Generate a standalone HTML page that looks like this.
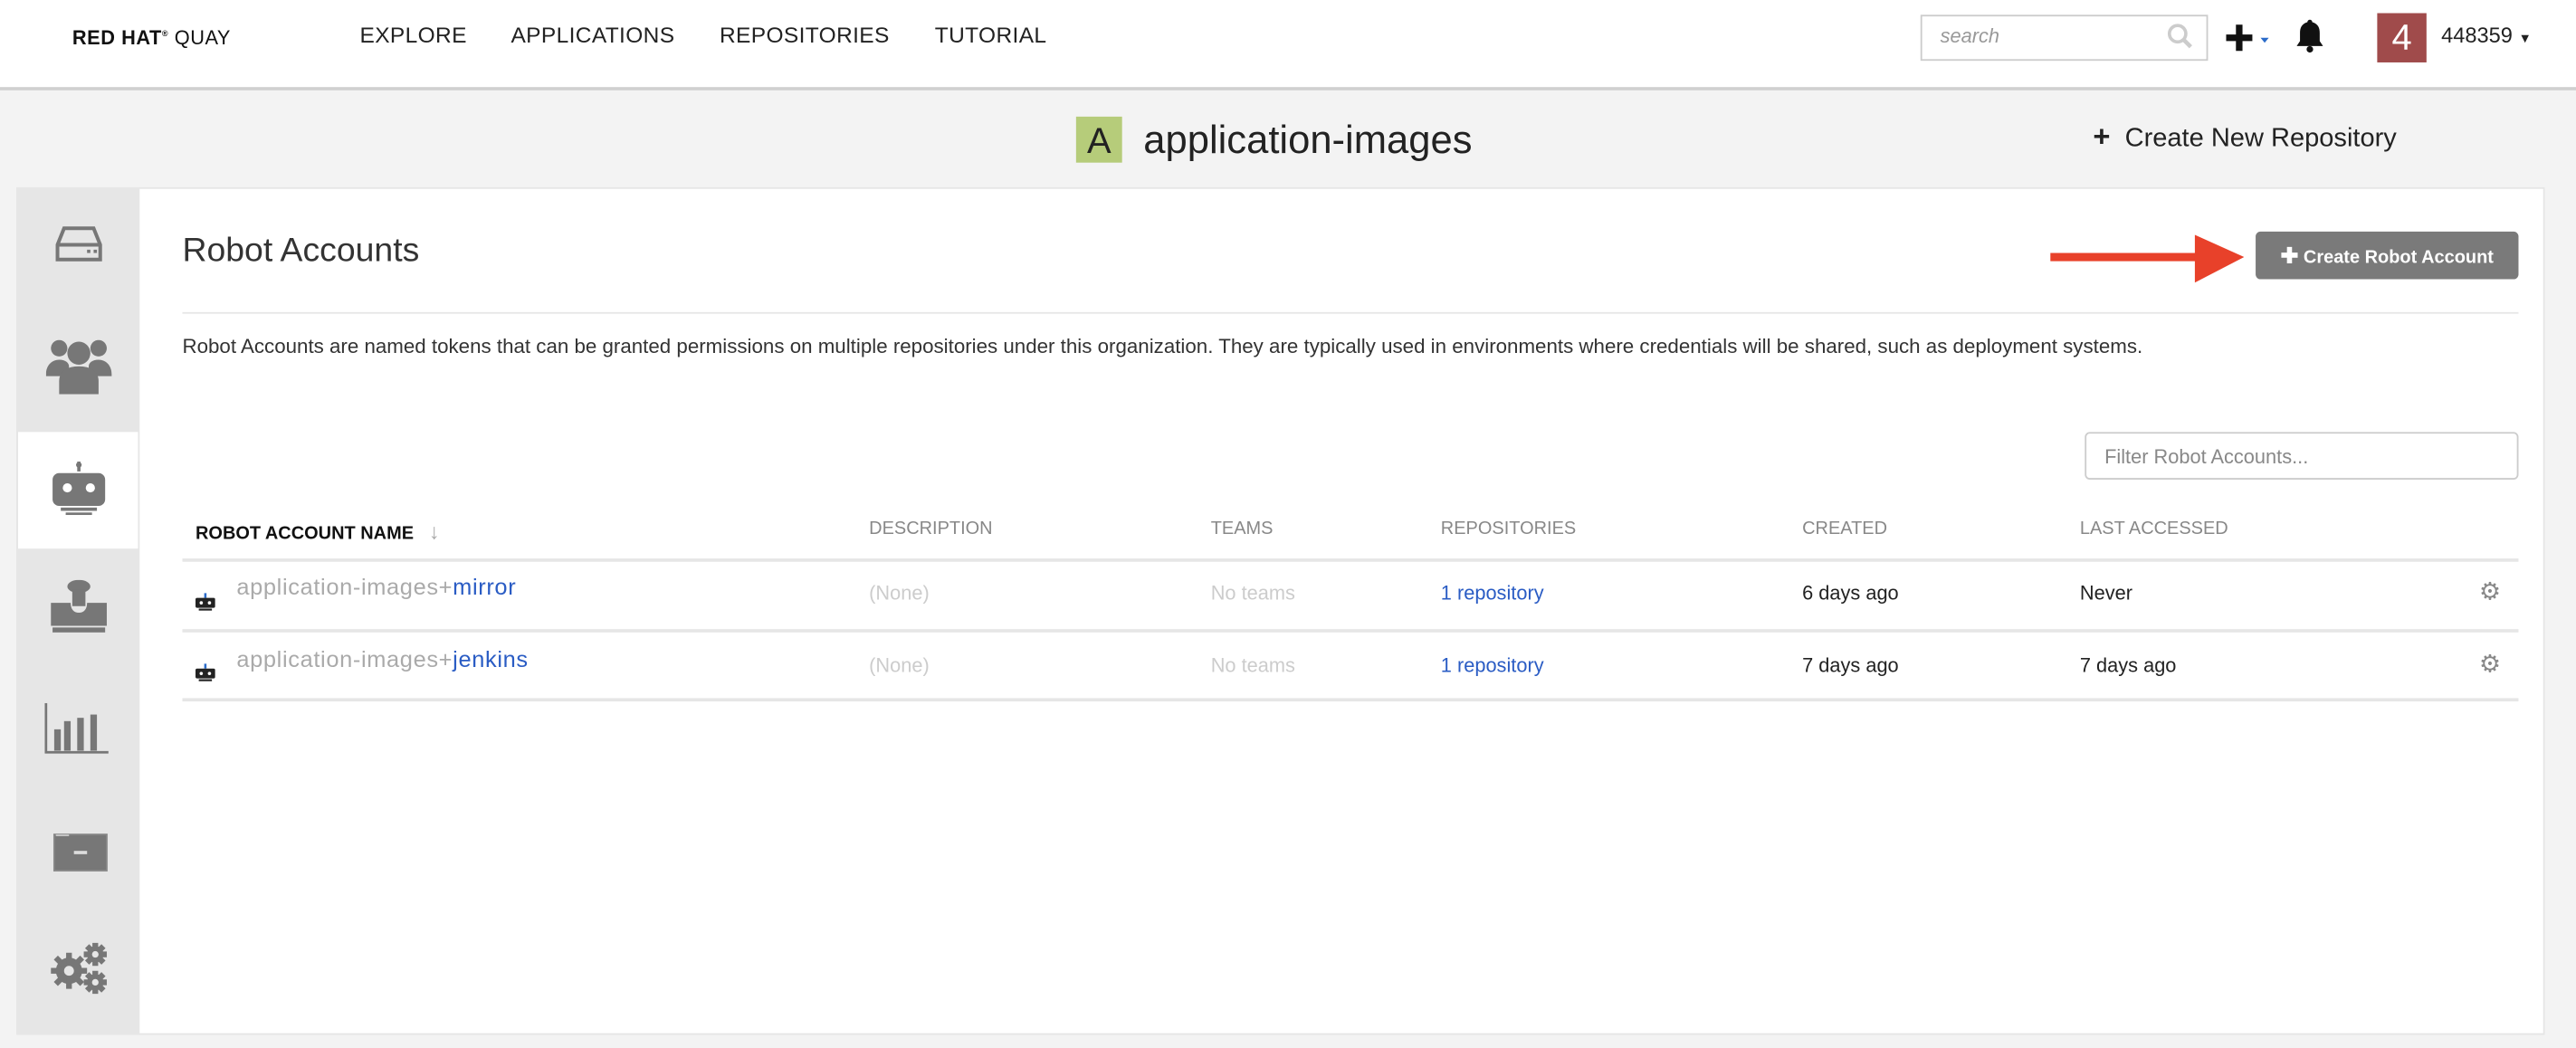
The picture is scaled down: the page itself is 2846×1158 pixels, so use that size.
<!DOCTYPE html>
<html><head><meta charset="utf-8"><style>
html,body{margin:0;padding:0;width:2846px;height:1158px;overflow:hidden;background:#f3f3f3}
#s{position:absolute;left:0;top:0;width:1568px;height:638px;transform:scale(1.81505);transform-origin:0 0;font-family:"Liberation Sans",sans-serif;color:#333;background:#f3f3f3}
.a{position:absolute;white-space:nowrap}
.hdr{position:absolute;left:0;top:0;width:1568px;height:53px;background:#fff;border-bottom:2px solid #d0d0d0}
.nav{font-size:13.5px;color:#222;top:14px;letter-spacing:.2px}
.th{font-size:11px;color:#888;top:316px}
.td{font-size:12px;top:354px}
.line{position:absolute;left:111px;width:1422px;height:1px;background:#e6e6e6}
</style></head><body><div id="s">
<div class="hdr"></div>
<div class="a" style="left:44px;top:16px;font-size:12px;font-weight:bold;color:#111;letter-spacing:.3px">RED HAT<sup style="font-size:5px">®</sup> <span style="font-weight:normal">QUAY</span></div>
<div class="a nav" style="left:219px">EXPLORE</div>
<div class="a nav" style="left:311px">APPLICATIONS</div>
<div class="a nav" style="left:438px">REPOSITORIES</div>
<div class="a nav" style="left:569px">TUTORIAL</div>
<div class="a" style="left:1169px;top:9px;width:173px;height:26px;border:1px solid #ccc;background:#fff"></div>
<div class="a" style="left:1181px;top:15px;font-size:12px;font-style:italic;color:#999">search</div>
<svg class="a" style="left:1319px;top:14px" width="16" height="16" viewBox="0 0 16 16"><circle cx="6.5" cy="6.5" r="5" fill="none" stroke="#ccc" stroke-width="2"/><path d="M10 10l4.5 4.5" stroke="#ccc" stroke-width="2.5"/></svg>
<svg class="a" style="left:1355px;top:14px" width="30" height="18" viewBox="0 0 30 18"><path d="M8 1v16M0 9h16" stroke="#111" stroke-width="4"/><path d="M21 9h5l-2.5 3z" fill="#2a6bc9"/></svg>
<svg class="a" style="left:1396px;top:11px" width="20" height="22" viewBox="0 0 20 22"><path d="M10 1c-1 0-1.5 1-1.5 1.5C5 3.5 4 6 4 9v5l-2 3h16l-2-3V9c0-3-1-5.5-4.5-6.5C11.5 2 11 1 10 1z" fill="#111"/><circle cx="10" cy="19" r="2" fill="#111"/></svg>
<div class="a" style="left:1447px;top:8px;width:30px;height:30px;background:#a04b4b;color:#fff;font-size:22px;text-align:center;line-height:30px">4</div>
<div class="a" style="left:1486px;top:14px;font-size:13px;color:#222">448359 <span style="font-size:8px">▼</span></div>

<div class="a" style="left:655px;top:71px;width:28px;height:28px;background:#b6cc7a;font-size:22px;text-align:center;line-height:29px;color:#222">A</div>
<div class="a" style="left:696px;top:72px;font-size:24px;color:#222">application-images</div>
<div class="a" style="left:1274px;top:73px;font-size:16px;color:#222"><b style="font-size:18px">+</b>&nbsp; Create New Repository</div>

<div class="a" style="left:10px;top:114px;width:1539px;height:516px;background:#fff;border:1px solid #e6e6e6;box-sizing:border-box"></div>
<div class="a" style="left:10px;top:114px;width:75px;height:516px;background:#e6e6e6"></div>
<div class="a" style="left:11px;top:263px;width:73px;height:71px;background:#fff"></div>
<svg class="a" style="left:33px;top:136px" width="30" height="26" viewBox="0 0 30 26"><path d="M6 3h18l4 10v9H2v-9z M2 13h26" fill="none" stroke="#777" stroke-width="2.2"/><rect x="20" y="16" width="2" height="2" fill="#777"/><rect x="24" y="16" width="2" height="2" fill="#777"/></svg>
<svg class="a" style="left:28px;top:204px" width="40" height="36" viewBox="0 0 40 36"><circle cx="8" cy="8" r="5" fill="#777"/><circle cx="32" cy="8" r="5" fill="#777"/><circle cx="20" cy="11" r="7" fill="#777"/><path d="M0 24c0-6 4-9 8-9s6 2 6 4v6H0z M40 24c0-6-4-9-8-9s-6 2-6 4v6h14z" fill="#777"/><path d="M8 36v-8c0-6 5-9 12-9s12 3 12 9v8z" fill="#777"/></svg>
<svg class="a" style="left:31px;top:281px" width="34" height="36" viewBox="0 0 34 36"><rect x="16" y="0" width="2" height="6" fill="#777"/><circle cx="17" cy="2" r="1.7" fill="#777"/><rect x="1" y="7" width="32" height="20" rx="4" fill="#777"/><circle cx="10" cy="16" r="2.8" fill="#fff"/><circle cx="24" cy="16" r="2.8" fill="#fff"/><rect x="6" y="28" width="22" height="2" fill="#777"/><rect x="9" y="31" width="16" height="1.5" fill="#777"/></svg>
<svg class="a" style="left:30px;top:353px" width="36" height="34" viewBox="0 0 36 34"><ellipse cx="18" cy="4" rx="7" ry="4" fill="#777"/><rect x="14" y="6" width="8" height="10" fill="#777"/><path d="M1 14h12c0 4 2 6 5 6s5-2 5-6h12v14H1z" fill="#777"/><rect x="2" y="29" width="32" height="3" fill="#777"/></svg>
<svg class="a" style="left:27px;top:428px" width="40" height="32" viewBox="0 0 40 32"><path d="M1 0v30h38" fill="none" stroke="#777" stroke-width="1.5"/><rect x="6" y="16" width="4" height="13" fill="#777"/><rect x="12" y="11" width="4" height="18" fill="#777"/><rect x="20" y="9" width="4" height="20" fill="#777"/><rect x="28" y="7" width="4" height="22" fill="#777"/></svg>
<svg class="a" style="left:32px;top:507px" width="34" height="24" viewBox="0 0 34 24"><rect x="1" y="1" width="32" height="22" fill="#777" stroke="#888"/><rect x="2" y="1" width="8" height="1" fill="#ccc"/><rect x="13" y="11" width="8" height="2" fill="#ddd"/></svg>
<svg class="a" style="left:29px;top:572px" width="38" height="34" viewBox="0 0 38 34"><g fill="#777"><circle cx="13" cy="19" r="8"/><circle cx="29" cy="9" r="5"/><circle cx="29" cy="26" r="5"/></g><g stroke="#777" stroke-width="3.5"><path d="M13 8v22M2 19h22M5 11l16 16M21 11L5 27"/><path d="M29 2v14M22 9h14M24 4l10 10M34 4L24 14"/><path d="M29 19v14M22 26h14M24 21l10 10M34 21L24 31"/></g><circle cx="13" cy="19" r="3" fill="#e6e6e6"/><circle cx="29" cy="9" r="2" fill="#e6e6e6"/><circle cx="29" cy="26" r="2" fill="#e6e6e6"/></svg>

<div class="a" style="left:111px;top:141px;font-size:20.6px;color:#333">Robot Accounts</div>
<div class="line" style="top:190px"></div>
<div class="a" style="left:111px;top:204px;font-size:12.3px;color:#333">Robot Accounts are named tokens that can be granted permissions on multiple repositories under this organization. They are typically used in environments where credentials will be shared, such as deployment systems.</div>
<svg class="a" style="left:1248px;top:143px" width="118" height="30" viewBox="0 0 118 30"><rect x="0" y="11" width="90" height="5" fill="#e8412a"/><path d="M88 0l30 13.5L88 29z" fill="#e8412a"/></svg>
<div class="a" style="left:1373px;top:141px;width:160px;height:29px;background:#7a7a7a;border-radius:3px;color:#fff;font-size:11px;font-weight:bold;line-height:29px;text-align:center"><span style="font-size:13px">✚</span> Create Robot Account</div>
<div class="a" style="left:1269px;top:263px;width:264px;height:29px;border:1px solid #ccc;border-radius:3px;box-sizing:border-box;background:#fff"></div>
<div class="a" style="left:1281px;top:271px;font-size:12px;color:#888">Filter Robot Accounts...</div>

<div class="a th" style="left:119px;color:#111;font-weight:bold">ROBOT ACCOUNT NAME &nbsp; <span style="color:#aaa;font-weight:normal;font-size:13px">↓</span></div>
<div class="a th" style="left:529px">DESCRIPTION</div>
<div class="a th" style="left:737px">TEAMS</div>
<div class="a th" style="left:877px">REPOSITORIES</div>
<div class="a th" style="left:1097px">CREATED</div>
<div class="a th" style="left:1266px">LAST ACCESSED</div>
<div class="line" style="top:340px;height:2px"></div>
<div class="line" style="top:383px;height:2px"></div>
<div class="line" style="top:425px;height:2px"></div>

<svg class="a" style="left:119px;top:361px" width="12" height="11" viewBox="0 0 12 11"><rect x="5.3" y="0" width="1.4" height="3" fill="#2a6bc9"/><rect x="0" y="3" width="12" height="6" rx="1" fill="#222"/><circle cx="3.5" cy="6" r="1" fill="#fff"/><circle cx="8.5" cy="6" r="1" fill="#fff"/><rect x="2" y="9.5" width="8" height="1.2" fill="#222"/></svg>
<svg class="a" style="left:119px;top:404px" width="12" height="11" viewBox="0 0 12 11"><rect x="5.3" y="0" width="1.4" height="3" fill="#2a6bc9"/><rect x="0" y="3" width="12" height="6" rx="1" fill="#222"/><circle cx="3.5" cy="6" r="1" fill="#fff"/><circle cx="8.5" cy="6" r="1" fill="#fff"/><rect x="2" y="9.5" width="8" height="1.2" fill="#222"/></svg>
<div class="a" style="left:144px;top:349px;font-size:14px;letter-spacing:.35px;color:#aaa">application-images+<span style="color:#2a5cc4">mirror</span></div>
<div class="a" style="left:144px;top:393px;font-size:14px;letter-spacing:.35px;color:#aaa">application-images+<span style="color:#2a5cc4">jenkins</span></div>
<div class="a td" style="left:529px;color:#ccc">(None)</div>
<div class="a td" style="left:737px;color:#ccc">No teams</div>
<div class="a td" style="left:877px;color:#2a5cc4">1 repository</div>
<div class="a td" style="left:1097px;color:#222">6 days ago</div>
<div class="a td" style="left:1266px;color:#222">Never</div>
<div class="a td" style="left:529px;top:398px;color:#ccc">(None)</div>
<div class="a td" style="left:737px;top:398px;color:#ccc">No teams</div>
<div class="a td" style="left:877px;top:398px;color:#2a5cc4">1 repository</div>
<div class="a td" style="left:1097px;top:398px;color:#222">7 days ago</div>
<div class="a td" style="left:1266px;top:398px;color:#222">7 days ago</div>
<div class="a" style="left:1509px;top:351px;font-size:15px;color:#888">⚙</div>
<div class="a" style="left:1509px;top:395px;font-size:15px;color:#888">⚙</div>
</div></body></html>
